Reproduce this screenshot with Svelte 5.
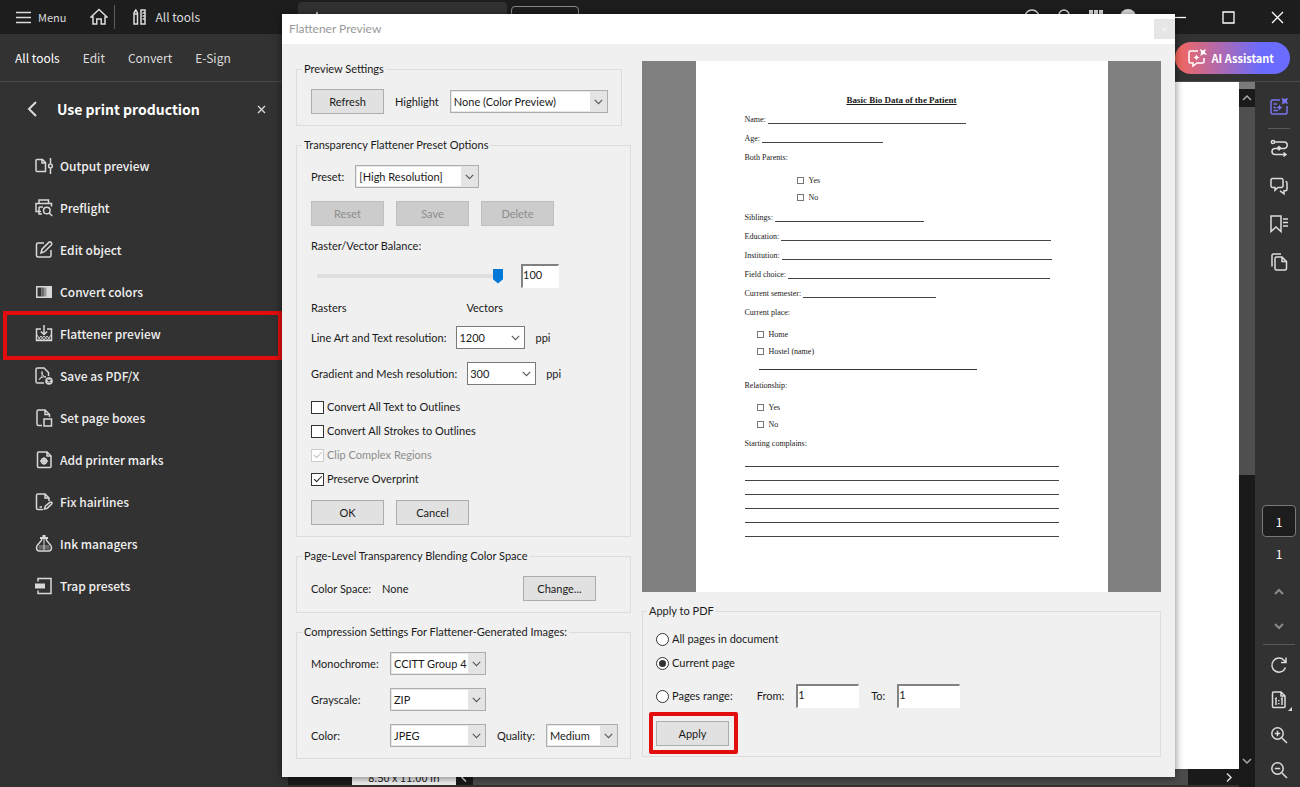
<script>
  const tools = [
    { id: "output", name: "Output preview" },
    { id: "preflight", name: "Preflight" },
    { id: "edit", name: "Edit object" },
    { id: "colors", name: "Convert colors" },
    { id: "flattener", name: "Flattener preview" },
    { id: "pdfx", name: "Save as PDF/X" },
    { id: "boxes", name: "Set page boxes" },
    { id: "marks", name: "Add printer marks" },
    { id: "hairlines", name: "Fix hairlines" },
    { id: "ink", name: "Ink managers" },
    { id: "trap", name: "Trap presets" },
  ];

  // rule widths are in preview pixels
  const form = [
    { label: "Name:", rule: 198 },
    { label: "Age:", rule: 121 },
    { label: "Both Parents:", options: ["Yes", "No"], deep: true },
    { label: "Siblings:", rule: 149 },
    { label: "Education:", rule: 270 },
    { label: "Institution:", rule: 270 },
    { label: "Field choice:", rule: 262 },
    { label: "Current semester:", rule: 133 },
    { label: "Current place:", options: ["Home", "Hostel (name)"], extra: 218 },
    { label: "Relationship:", options: ["Yes", "No"] },
    { label: "Starting complains:" },
  ];

  let selected = $state("flattener");
  let balance = $state(100);
  let pages = $state("current");
</script>

{#snippet combo(id, value, size, plain)}
  <span class="combo {size}" class:plain>
    <select {id}>
      <option>{value}</option>
    </select>
    <span class="arrow">
      <svg width="9" height="6" viewBox="0 0 9 6"><path d="M.8 .8 4.5 4.6 8.2 .8" /></svg>
    </span>
  </span>
{/snippet}

{#snippet toolIcon(id)}
  <svg class="icon" width="18" height="18" viewBox="0 0 18 18">
    {#if id === "output"}
      <path d="M2 2.500h5.500l3 3V14.500H2a1 1 0 0 1-1-1v-10a1 1 0 0 1 1-1zM7 2.500V6h3.500M15.500 1v5.500M15.500 11.500V17" />
      <circle cx="15.500" cy="9" r="1.900" />
    {:else if id === "preflight"}
      <path d="M4 4V1h9.500v3M6 12.500H1V4.500h15.500v3M4 8h4M4 8v7h3" />
      <circle cx="11.800" cy="11.500" r="3.300" />
      <path d="m14.200 14 3 3" />
    {:else if id === "edit"}
      <path d="M9 2H3a1.500 1.500 0 0 0-1.500 1.500v11A1.500 1.500 0 0 0 3 16h11.500a1.500 1.500 0 0 0 1.500-1.500V9" />
      <path d="m6 12 1-3.800 7-7c1.500-1 3.500 1 2.500 2.500l-7 7z" />
    {:else if id === "colors"}
      <path class="solid" d="M1 3h16v12H1z" />
      <path class="dark" d="M2.500 4.500h4v9h-4z" />
      <path class="mid" d="M6.500 4.500h2.500v9H6.500z" />
      <path class="soft" d="M9 4.500h2.500v9H9z" />
    {:else if id === "flattener"}
      <path d="M6 4H1.500v11.500h15V4H12M9 0v9M5.800 6.500 9 9.500l3.200-3" />
      <path class="thin" d="m2 10 3.500 5L9 11l3.500 4L16 10M3 15l3-4 3 4 3-4 3 4" />
    {:else if id === "pdfx"}
      <path d="M9 16H2.500a1.500 1.500 0 0 1-1.500-1.500v-12A1.500 1.500 0 0 1 2.500 1H9l4.500 4.500V9" />
      <path class="thin" d="M7 4.500c-1 2 1 5 4 5.500-3-.5-5.500.5-7 2.500 2-1 4-4 3-8z" />
      <circle class="solid" cx="14" cy="14" r="3.800" />
      <path class="cut" d="m12.500 12.500 3 3M15.500 12.500l-3 3" />
    {:else if id === "boxes"}
      <path d="M7 16.500H3.500A1.500 1.500 0 0 1 2 15V2.500A1.500 1.500 0 0 1 3.500 1H10l4.500 4.500V8M10 1v4.500h4.500M9 10h7.500v7H9z" />
    {:else if id === "marks"}
      <path d="M3.500 1H12l4 4v10.500a1 1 0 0 1-1 1H3.500a1 1 0 0 1-1-1V2a1 1 0 0 1 1-1zM12 1v4h4" />
      <circle class="solid" cx="9" cy="10" r="1.500" />
      <circle cx="9" cy="10" r="2.600" />
      <path d="M9 6.200v7.600M5.200 10h7.600" />
    {:else if id === "hairlines"}
      <path d="M8 16.500H3A1.500 1.500 0 0 1 1.500 15V2.500A1.500 1.500 0 0 1 3 1h7l4 4v3M10 1v4h4M4.500 14H7" />
      <path d="m9.500 16 .8-2.800 4.700-4c1.300-.8 2.500.5 1.700 1.700l-4.500 4.500z" />
    {:else if id === "ink"}
      <path class="mid" d="M3.500 10h11v4.500h-11z" />
      <path d="M7 3.500C7 7 2 8.500 1.500 12.500c0 2.500 1 3.500 3 3.500h9c2 0 3-1 3-3.500C16 8.500 11 7 11 3.500" />
      <path class="thin" d="M9 4v11" />
      <path class="solid" d="M5 2h2.500V.5a1.500 1.500 0 0 1 3 0V2H13v2H5z" />
    {:else}
      <path d="M3 4.500V1.500h13v15H3v-3" />
      <path class="solid" d="M0 6.500h10v5H0z" />
    {/if}
  </svg>
{/snippet}

<div class="app">
  <header class="titlebar">
    <button class="menu">
      <svg width="15" height="13" viewBox="0 0 15 13"><path d="M0 1.500h15M0 6.500h15M0 11.500h15" /></svg>
      Menu
    </button>
    <button class="home" aria-label="Home">
      <svg width="18" height="18" viewBox="0 0 18 18"><path d="M1 9 9 1.500 17 9h-2v7h-3.800v-5H6.800v5H3V9z" /></svg>
    </button>
    <button class="all">
      <svg width="13" height="16" viewBox="0 0 13 16"><path d="M1 4 2.800 1l1.700 3v11H1zM1 5h3.500M8 1h4v14H8zM9.500 4H12M9.500 7H12M9.500 10H12" /></svg>
      All tools
    </button>
    <div class="tab">
      <svg width="14" height="14" viewBox="0 0 14 14"><path class="star" d="m7 0 2 5h5l-4 3 1.500 5L7 10l-4.500 3L4 8 0 5h5z" /></svg>
    </div>
    <button class="create" aria-label="Create"></button>
    <div class="account">
      <svg width="18" height="18" viewBox="0 0 18 18"><circle cx="9" cy="9" r="7" /></svg>
      <svg width="18" height="18" viewBox="0 0 18 18"><path d="M4 13V7a5 5 0 0 1 10 0v6z" /></svg>
      <svg width="18" height="18" viewBox="0 0 18 18"><path class="star" d="M2 2h4v4H2zM7 2h4v4H7zM12 2h4v4h-4z" /></svg>
      <svg width="18" height="18" viewBox="0 0 18 18"><circle class="star" cx="9" cy="9" r="8" /></svg>
    </div>
    <div class="window">
      <button aria-label="Minimize"><svg width="13" height="13" viewBox="0 0 13 13"><path d="M0 6.500h13" /></svg></button>
      <button aria-label="Maximize"><svg width="13" height="13" viewBox="0 0 13 13"><path d="M1 1h11v11H1z" /></svg></button>
      <button aria-label="Close"><svg width="13" height="13" viewBox="0 0 13 13"><path d="m1 1 11 11M12 1 1 12" /></svg></button>
    </div>
  </header>

  <nav class="toolbar">
    <a href="#tools" class="on">All tools</a>
    <a href="#edit">Edit</a>
    <a href="#convert">Convert</a>
    <a href="#esign">E-Sign</a>
    <button class="assistant">
      <svg width="20" height="20" viewBox="0 0 20 20">
        <path d="M11 3H3.500A1.500 1.500 0 0 0 2 4.500v9A1.500 1.500 0 0 0 3.500 15H6v3l4-3h5.500a1.500 1.500 0 0 0 1.500-1.500V10" />
        <path class="star" d="m13 1 3 1.500L19 1l-1.200 3L20 7l-3.500-1L13.500 8 14 4.500z" />
        <path class="star" d="m9.500 6.500 1 2 2 1-2 1-1 2-1-2-2-1 2-1z" />
      </svg>
      AI Assistant
    </button>
  </nav>

  <div class="main">
    <aside class="sidebar">
      <div class="head">
        <button aria-label="Back"><svg width="10" height="16" viewBox="0 0 10 16"><path d="M9 1 2 8l7 7" /></svg></button>
        <h1>Use print production</h1>
        <button aria-label="Close panel"><svg class="x" width="9" height="9" viewBox="0 0 9 9"><path d="m1 1 7 7M8 1 1 8" /></svg></button>
      </div>
      <ul>
        {#each tools as tool}
          <li class:marked={tool.id === selected}>
            <button onclick={() => (selected = tool.id)}>
              {@render toolIcon(tool.id)}
              {tool.name}
            </button>
          </li>
        {/each}
      </ul>
    </aside>

    <div class="document">
      <div class="canvas"></div>
      <div class="hscroll">
        <span class="pagesize">8.50 x 11.00 in</span>
        <svg width="17" height="17" viewBox="0 0 17 17"><path d="M10 5 6 8.500l4 4" /></svg>
        <span class="thumb"></span>
        <svg class="right" width="17" height="17" viewBox="0 0 17 17"><path d="m6 4.500 4 4-4 4" /></svg>
      </div>
    </div>

    <div class="vscroll">
      <svg width="16" height="18" viewBox="0 0 16 18"><path d="m4 11 4-4 4 4" /></svg>
      <span class="thumb"></span>
      <svg class="down" width="16" height="16" viewBox="0 0 16 16"><path d="m4 6 4 4 4-4" /></svg>
    </div>

    <aside class="rail">
      <button class="purple" aria-label="Summary">
        <svg width="20" height="20" viewBox="0 0 20 20">
          <path d="M11 3H3.500A1.500 1.500 0 0 0 2 4.500v11A1.500 1.500 0 0 0 3.500 17h13a1.500 1.500 0 0 0 1.500-1.500V9M4.500 7H8M4.500 10.500H7M4.500 13.500H9" />
          <path class="star" d="m12.500 1 3 1 3.500-1-1.200 3L19 7l-3-1-3 1.500.5-3z" />
          <path class="star" d="m10.500 7.500 1 2 2 1-2 1-1 2-1-2-2-1 2-1z" />
        </svg>
      </button>
      <hr />
      <button aria-label="Workflow">
        <svg width="20" height="20" viewBox="0 0 20 20">
          <circle cx="4" cy="4" r="1.600" />
          <path d="M6 4h9a3 3 0 0 1 0 6.500H6A3 3 0 0 0 6 16.500h10M14.500 14.500l2.500 2-2.500 2" />
          <path class="star" d="M10 7.500 12.500 10 10 13 7.500 10z" />
        </svg>
      </button>
      <button aria-label="Comments">
        <svg width="20" height="20" viewBox="0 0 20 20"><path d="M3.500 2.500h9A1.500 1.500 0 0 1 14 4v6a1.500 1.500 0 0 1-1.500 1.500H9l-3 2.800v-2.800H3.500A1.500 1.500 0 0 1 2 10V4a1.500 1.500 0 0 1 1.500-1.500zM16.500 5.500c1 0 1.500.5 1.500 1.500v6c0 1-.5 1.800-1.500 1.800h-1.500v3l-4-3" /></svg>
      </button>
      <button aria-label="Bookmarks">
        <svg width="20" height="20" viewBox="0 0 20 20"><path d="M2 2h10v15.500l-5-4.500-5 4.500zM14 5h5M14 8.500h5M14 12h5" /></svg>
      </button>
      <button aria-label="Pages">
        <svg width="20" height="20" viewBox="0 0 20 20"><path d="M3 14.500V3.500A1.500 1.500 0 0 1 4.500 2H12M7.500 5H13l4.500 4.500v7A1.500 1.500 0 0 1 16 18H7.500A1.500 1.500 0 0 1 6 16.500v-10A1.500 1.500 0 0 1 7.500 5zM13 5v4.500h4.500" /></svg>
      </button>
      <div class="pager">
        <input aria-label="Page number" value="1" />
        <span>1</span>
        <button class="dim" aria-label="Previous page"><svg width="10" height="7" viewBox="0 0 10 7"><path d="m1 6 4-4 4 4" /></svg></button>
        <button class="dim" aria-label="Next page"><svg width="10" height="7" viewBox="0 0 10 7"><path d="m1 1 4 4 4-4" /></svg></button>
        <hr />
        <button aria-label="Rotate">
          <svg width="18" height="18" viewBox="0 0 18 18"><path d="M15.500 11.500A7 7 0 1 1 14 4.300l1.500 1.500M16 1.500v5h-5" /></svg>
        </button>
        <button class="fit" aria-label="Actual size">
          <svg width="18" height="18" viewBox="0 0 18 18"><path d="M3.500 1H11l4 4v10.500a1 1 0 0 1-1 1H3.500a1 1 0 0 1-1-1V2a1 1 0 0 1 1-1zM11 1v4h4M5 8l1-.7V14M11 8l1-.7V14M8.800 9v1.200M8.800 12v1.200" /></svg>
          <svg class="corner" width="4" height="4" viewBox="0 0 4 4"><path class="star" d="M4 0v4H0z" /></svg>
        </button>
        <button aria-label="Zoom in">
          <svg width="18" height="18" viewBox="0 0 18 18"><circle cx="7.500" cy="7.500" r="5.700" /><path d="m12 12 5 5M7.500 4.800v5.400M4.800 7.500h5.400" /></svg>
        </button>
        <button aria-label="Zoom out">
          <svg width="18" height="18" viewBox="0 0 18 18"><circle cx="7.500" cy="7.500" r="5.700" /><path d="m12 12 5 5M4.800 7.500h5.400" /></svg>
        </button>
      </div>
    </aside>
  </div>

  <section class="dialog" aria-label="Flattener Preview">
    <header>
      <span>Flattener Preview</span>
      <button aria-label="Close dialog"><svg width="5" height="5" viewBox="0 0 7 7"><path d="m1 1 5 5M6 1 1 6" /></svg></button>
    </header>
    <div class="body">
      <div class="col">
        <fieldset class="short">
          <legend>Preview Settings</legend>
          <div class="row">
            <button class="btn">Refresh</button>
            <label for="highlight">Highlight</label>
            {@render combo("highlight", "None (Color Preview)", "xl")}
          </div>
        </fieldset>

        <fieldset>
          <legend>Transparency Flattener Preset Options</legend>
          <div class="row">
            <label for="preset">Preset:</label>
            {@render combo("preset", "[High Resolution]", "lg")}
          </div>
          <div class="row buttons">
            <button class="btn" disabled>Reset</button>
            <button class="btn" disabled>Save</button>
            <button class="btn" disabled>Delete</button>
          </div>
          <label class="line" for="balance">Raster/Vector Balance:</label>
          <div class="row balance">
            <input type="range" id="balance" min="0" max="100" bind:value={balance} />
            <input class="box" aria-label="Balance value" bind:value={balance} />
          </div>
          <div class="ends"><span>Rasters</span><span>Vectors</span></div>
          <div class="row res">
            <label for="lineart">Line Art and Text resolution:</label>
            {@render combo("lineart", "1200", "xs", true)}
            <span>ppi</span>
          </div>
          <div class="row res">
            <label for="mesh">Gradient and Mesh resolution:</label>
            {@render combo("mesh", "300", "xs", true)}
            <span>ppi</span>
          </div>
          <div class="checks">
            <label><input type="checkbox" />Convert All Text to Outlines</label>
            <label><input type="checkbox" />Convert All Strokes to Outlines</label>
            <label class="off"><input type="checkbox" checked disabled />Clip Complex Regions</label>
            <label><input type="checkbox" checked />Preserve Overprint</label>
          </div>
          <div class="row buttons last">
            <button class="btn">OK</button>
            <button class="btn">Cancel</button>
          </div>
        </fieldset>

        <fieldset>
          <legend>Page-Level Transparency Blending Color Space</legend>
          <div class="row space">
            <span>Color Space:</span>
            <span>None</span>
            <button class="btn">Change...</button>
          </div>
        </fieldset>

        <fieldset>
          <legend>Compression Settings For Flattener-Generated Images:</legend>
          <div class="compression">
            <label for="mono">Monochrome:</label>
            {@render combo("mono", "CCITT Group 4", "md")}
            <label class="first" for="gray">Grayscale:</label>
            {@render combo("gray", "ZIP", "md")}
            <label class="first" for="color">Color:</label>
            {@render combo("color", "JPEG", "md")}
            <label for="quality">Quality:</label>
            {@render combo("quality", "Medium", "sm")}
          </div>
        </fieldset>
      </div>

      <div class="col">
        <div class="preview">
          <article>
            <h2>Basic Bio Data of the Patient</h2>
            {#each form as item}
              <div class="field">
                {item.label}
                {#if item.rule}<i style="width: {item.rule}px"></i>{/if}
              </div>
              {#if item.options}
                <ul class:deep={item.deep}>
                  {#each item.options as option}
                    <li>{option}</li>
                  {/each}
                </ul>
              {/if}
              {#if item.extra}<div class="extra" style="width: {item.extra}px"></div>{/if}
            {/each}
            {#each Array(6) as _}
              <div class="rule"></div>
            {/each}
          </article>
        </div>

        <fieldset class="apply">
          <legend>Apply to PDF</legend>
          <label><input type="radio" value="all" bind:group={pages} />All pages in document</label>
          <label><input type="radio" value="current" bind:group={pages} />Current page</label>
          <div class="range">
            <label><input type="radio" value="range" bind:group={pages} />Pages range:</label>
            <label for="from">From:</label>
            <input class="box" id="from" value="1" />
            <label for="to">To:</label>
            <input class="box" id="to" value="1" />
          </div>
          <span class="marked"><button class="btn">Apply</button></span>
        </fieldset>
      </div>
    </div>
  </section>
</div>

<style>
  :global(body) {
    background: #323232;
  }

  .app {
    position: relative;
    display: flex;
    flex-direction: column;
    height: 100vh;
    overflow: hidden;
    font-family: "Noto Sans CJK SC", "Noto Sans", sans-serif;
    font-size: 12px;
    line-height: 16px;
    color: #dcdcdc;
  }

  button,
  input,
  select {
    font: inherit;
    color: inherit;
    margin: 0;
    padding: 0;
    border: 0;
    background: none;
    box-sizing: border-box;
  }

  svg {
    display: block;
    flex: none;
    fill: none;
    stroke: currentColor;
    stroke-width: 1.5;
  }

  .star {
    fill: currentColor;
    stroke: none;
  }

  /* title bar */
  .titlebar {
    display: flex;
    align-items: center;
    height: 34px;
    flex: none;
    background: #1d1d1d;
  }

  .titlebar button {
    display: flex;
    align-items: center;
    gap: 8px;
  }

  .titlebar .menu {
    margin-left: 16px;
    gap: 7px;
    font-size: 11px;
  }

  .titlebar .home {
    margin-left: 24px;
    padding-right: 6px;
    height: 24px;
    border-right: 1px solid #5a5a5a;
  }

  .titlebar .all {
    margin-left: 18px;
    gap: 9px;
  }

  .tab {
    align-self: flex-end;
    box-sizing: border-box;
    width: 209px;
    height: 32px;
    margin-left: 98px;
    padding: 9px 12px;
    border-radius: 4px 4px 0 0;
    background: #323232;
  }

  .titlebar .create {
    align-self: flex-end;
    width: 68px;
    height: 28px;
    margin-left: 4px;
    border: 1px solid #8a8a8a;
    border-radius: 4px;
  }

  .account {
    display: flex;
    gap: 14px;
    margin-left: auto;
  }

  .window {
    display: flex;
    gap: 36px;
    margin: 0 16px 0 36px;
  }

  .window svg {
    stroke: #fff;
    stroke-width: 1.3;
  }

  /* second bar */
  .toolbar {
    display: flex;
    align-items: center;
    gap: 23px;
    height: 47px;
    flex: none;
    padding: 0 10px 0 15px;
    border-bottom: 1px solid #4a4a4a;
    background: #323232;
  }

  .toolbar a {
    color: inherit;
    text-decoration: none;
  }

  .toolbar a.on {
    color: #fff;
  }

  .assistant {
    display: flex;
    align-items: center;
    gap: 5px;
    height: 32px;
    margin-left: auto;
    padding: 0 16px 0 12px;
    border-radius: 16px;
    background: linear-gradient(90deg, #f8675a, #6a6cff 75%);
    color: #fff;
    font-size: 11px;
    font-weight: 700;
  }

  .main {
    display: flex;
    flex: 1;
    min-height: 0;
  }

  /* tools panel */
  .sidebar {
    width: 288px;
    flex: none;
    background: #323232;
  }

  .head {
    display: flex;
    align-items: center;
    height: 54px;
    padding: 0 22px 0 27px;
  }

  .head svg {
    stroke-width: 2;
  }

  .head .x {
    stroke-width: 1.3;
  }

  .head h1 {
    flex: 1;
    margin: 0 0 0 20px;
    font-size: 14px;
    line-height: 22px;
    color: #fff;
  }

  ul {
    margin: 0;
    padding: 0;
    list-style: none;
  }

  .sidebar ul {
    padding: 9px 0 0 3px;
  }

  .sidebar li button {
    display: flex;
    align-items: center;
    gap: 7px;
    width: 100%;
    height: 42px;
    padding-left: 32px;
    color: #f0f0f0;
    font-weight: 500;
    text-align: left;
  }

  .icon {
    color: #d8d8d8;
  }

  .icon .solid {
    fill: currentColor;
    stroke: none;
  }

  .icon .dark {
    fill: #323232;
    stroke: none;
  }

  .icon .mid {
    fill: #6a6a6a;
    stroke: none;
  }

  .icon .soft {
    fill: #989898;
    stroke: none;
  }

  .icon .thin {
    stroke-width: 1;
  }

  .icon .cut {
    stroke: #323232;
    stroke-width: 1.2;
  }

  .marked {
    position: relative;
    display: block;
  }

  .marked::after {
    content: "";
    position: absolute;
    inset: -2px 6px -5px 0;
    border: 4px solid #e40d0d;
    pointer-events: none;
  }

  /* document behind the dialog */
  .document {
    display: flex;
    flex-direction: column;
    flex: 1;
    min-width: 0;
  }

  .canvas {
    flex: 1;
    background: #fff;
  }

  .hscroll {
    display: flex;
    height: 18px;
    box-sizing: border-box;
    overflow: hidden;
    padding-left: 64px;
    border-bottom: 2px solid #352f2e;
    background: #1a1a1a;
  }

  .pagesize {
    width: 104px;
    flex: none;
    background: #f0f0f0;
    color: #222;
    font-size: 11px;
    text-align: center;
  }

  .hscroll .thumb {
    flex: 1;
    background: #4b4b4b;
  }

  .hscroll .right {
    margin: 0 1px 0 33px;
  }

  .vscroll {
    display: flex;
    flex-direction: column;
    width: 16px;
    padding-bottom: 18px;
    border-top: 7px solid #7a7a7a;
    background: #1a1a1a;
    color: #a8a8a8;
  }

  .vscroll .thumb {
    height: 368px;
    background: #4f4f4f;
  }

  .vscroll .down {
    margin-top: auto;
  }

  /* right rail */
  .rail {
    display: flex;
    flex-direction: column;
    align-items: center;
    width: 45px;
    padding: 6px 0 0 3px;
    box-sizing: border-box;
    background: #323232;
  }

  .rail button {
    position: relative;
    display: flex;
    align-items: center;
    justify-content: center;
    width: 100%;
    height: 38px;
    flex: none;
  }

  .rail hr {
    width: 22px;
    height: 1px;
    flex: none;
    margin: 2px 0 0;
    border: 0;
    background: #5a5a5a;
  }

  .purple {
    color: #7a76f0;
  }

  .pager {
    display: flex;
    flex-direction: column;
    align-items: center;
    width: 100%;
    margin-top: auto;
    color: #fff;
  }

  .pager input {
    width: 34px;
    height: 32px;
    border: 1px solid #7a7a7a;
    border-radius: 4px;
    background: #1d1d1d;
    text-align: center;
  }

  .pager span {
    margin: 9px 0 12px;
  }

  .pager hr {
    width: 32px;
    margin: 0 0 2px;
  }

  .rail .pager button {
    height: 35px;
  }

  .pager button {
    color: #dcdcdc;
  }

  .pager .dim {
    color: #8a8a8a;
  }

  .dim svg {
    stroke-width: 2;
  }

  .pager .corner {
    position: absolute;
    right: 8px;
    bottom: 6px;
  }

  /* dialog */
  .dialog {
    position: absolute;
    top: 14px;
    left: 282px;
    right: 125px;
    background: #f0f0f0;
    color: #1a1a1a;
    font-family: Lato, "Noto Sans", sans-serif;
    font-size: 11px;
    box-shadow: 0 1px 8px rgba(0, 0, 0, 0.5);
  }

  .dialog header {
    display: flex;
    align-items: center;
    justify-content: space-between;
    height: 30px;
    padding-left: 7px;
    background: #fff;
    color: #999;
    font-size: 12px;
  }

  .dialog header button {
    display: flex;
    align-items: center;
    justify-content: center;
    width: 21px;
    height: 20px;
    background: #e6e6e6;
    color: #f4f4f4;
  }

  .body {
    display: grid;
    grid-template-columns: 335px 1fr;
    gap: 11px;
    padding: 17px 14px 18px;
  }

  .col {
    display: flex;
    flex-direction: column;
    gap: 11px;
    min-width: 0;
  }

  fieldset {
    min-width: 0;
    margin: 0;
    padding: 12px 14px 11px;
    border: 1px solid #dcdcdc;
  }

  fieldset.short {
    margin-right: 9px;
  }

  legend {
    margin-left: -9px;
    padding: 0 2px;
  }

  .row {
    display: flex;
    align-items: center;
    gap: 11px;
  }

  .btn {
    flex: none;
    width: 73px;
    height: 25px;
    border: 1px solid #adadad;
    background: #e1e1e1;
  }

  .btn:disabled {
    border-color: #bfbfbf;
    background: #ccc;
    color: #8d8d8d;
  }

  .buttons {
    gap: 12px;
    margin: 13px 0 12px;
  }

  .buttons.last {
    margin: 0;
  }

  .combo {
    position: relative;
    display: block;
    flex: none;
    height: 23px;
  }

  .combo.xl {
    width: 158px;
  }

  .combo.lg {
    width: 124px;
  }

  .combo.md {
    width: 96px;
  }

  .combo.sm {
    width: 72px;
  }

  .combo.xs {
    width: 69px;
  }

  .combo select {
    appearance: none;
    width: 100%;
    height: 100%;
    padding: 0 16px 0 3px;
    border: 1px solid #adadad;
    background: #fff;
    box-shadow: inset 0 0 0 1px #e6e6e6;
  }

  .combo .arrow {
    position: absolute;
    inset: 1px 1px 1px auto;
    display: flex;
    align-items: center;
    justify-content: center;
    width: 17px;
    background: #e4e4e4;
    color: #555;
    pointer-events: none;
  }

  .combo.plain select {
    padding-left: 2px;
    border-color: #7a7a7a;
    box-shadow: none;
  }

  .combo.plain .arrow {
    background: none;
  }

  .combo svg {
    stroke-width: 1.1;
  }

  .line {
    display: block;
  }

  .balance {
    gap: 18px;
    margin: 10px 0 12px 6px;
  }

  input[type="range"] {
    appearance: none;
    width: 186px;
    height: 16px;
    background: linear-gradient(#dedede, #dedede) center / 100% 4px no-repeat;
  }

  input[type="range"]::-webkit-slider-thumb {
    appearance: none;
    width: 10px;
    height: 15px;
    background: #0078d7;
    clip-path: polygon(0 0, 100% 0, 100% 72%, 50% 100%, 0 72%);
  }

  .box {
    width: 63px;
    height: 24px;
    padding: 0 0 4px 0;
    border: 1px solid #fff;
    border-top: 2px solid #828282;
    border-left: 2px solid #828282;
    background: #fff;
  }

  .balance .box {
    width: 38px;
  }

  .ends {
    display: flex;
    justify-content: space-between;
    width: 192px;
    margin-bottom: 10px;
  }

  .res {
    gap: 10px;
    margin-bottom: 13px;
  }

  .checks {
    display: flex;
    flex-direction: column;
    gap: 8px;
    margin: 14px 0 13px;
  }

  .checks label,
  .apply label {
    display: flex;
    align-items: center;
    gap: 3px;
  }

  .checks .off {
    color: #8d8d8d;
  }

  input[type="checkbox"],
  input[type="radio"] {
    appearance: none;
    display: grid;
    place-items: center;
    width: 13px;
    height: 13px;
    border: 1px solid #333;
    background: #fff;
  }

  input[type="checkbox"]:disabled {
    border-color: #ccc;
    color: #bbb;
  }

  input[type="checkbox"]:checked::before {
    content: "";
    width: 7px;
    height: 3px;
    margin-bottom: 3px;
    border: solid currentColor;
    border-width: 0 0 1px 1px;
    transform: rotate(-45deg);
  }

  input[type="radio"] {
    border-radius: 50%;
  }

  input[type="radio"]:checked::before {
    content: "";
    width: 7px;
    height: 7px;
    border-radius: 50%;
    background: #333;
  }

  .space .btn {
    margin: 0 20px 0 auto;
  }

  .compression {
    display: grid;
    grid-template-columns: 68px 96px auto 1fr;
    gap: 13px 11px;
    align-items: center;
  }

  .compression .first {
    grid-column: 1;
  }

  /* page preview */
  .preview {
    display: flex;
    justify-content: center;
    height: 531px;
    background: #808080;
  }

  article {
    box-sizing: border-box;
    width: 412px;
    padding: 29px 49px;
    background: #fff;
    font-family: "Liberation Serif", serif;
    font-size: 8px;
    line-height: 17px;
  }

  article h2 {
    margin: 0;
    font-size: 9px;
    line-height: 20px;
    text-align: center;
    text-decoration: underline;
  }

  .field {
    display: flex;
    gap: 2px;
    align-items: center;
    height: 19px;
    white-space: nowrap;
  }

  .field i {
    height: 8px;
    border-bottom: 1px solid #444;
  }

  article ul {
    margin: 4px 0 1px 12px;
  }

  article ul.deep {
    margin: 5px 0 2px 52px;
  }

  article li {
    display: flex;
    align-items: center;
    gap: 5px;
  }

  article li::before {
    content: "";
    width: 5px;
    height: 5px;
    border: 1px solid #777;
  }

  .extra {
    height: 8px;
    margin: 0 0 6px 14px;
    border-bottom: 1px solid #333;
  }

  .rule {
    height: 13px;
    border-bottom: 1px solid #444;
  }

  .apply {
    padding: 12px 13px 10px;
  }

  .apply > label {
    margin-bottom: 8px;
  }

  .range {
    display: flex;
    align-items: center;
    gap: 12px;
    margin: 13px 0;
  }

  .range label:first-child {
    margin-right: 12px;
  }

  .apply .marked {
    width: 73px;
  }

  .apply .marked::after {
    inset: -9px -9px -8px -7px;
    border-radius: 2px;
  }
</style>
